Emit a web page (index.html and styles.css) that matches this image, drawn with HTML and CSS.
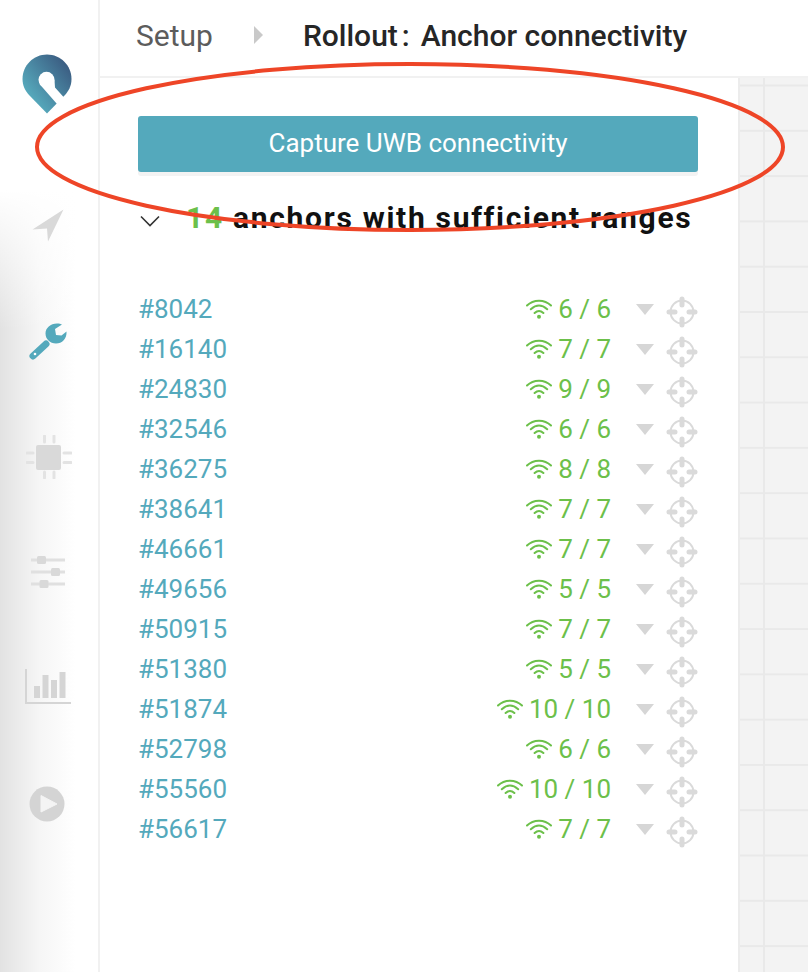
FILE: index.html
```html
<!DOCTYPE html>
<html lang="en">
  <head>
    <meta charset="UTF-8" />
    <title>Anchor connectivity</title>
    <link rel="stylesheet" href="styles.css">
  </head>
  <body>
    <svg width="0" height="0" class="defs">
      <symbol id="wifi" viewBox="0 0 26 20">
        <path d="M1 6.500C7.500 0 18.500 0 25 6.500M4.800 10.300C10 5.500 16 5.500 21.200 10.300M8.600 14C11.500 11.300 14.500 11.300 17.400 14" fill="none" stroke="currentColor" stroke-width="2" stroke-linecap="round"/>
        <circle cx="13" cy="17.800" r="2" fill="currentColor"/>
      </symbol>
      <symbol id="target" viewBox="0 0 32 32">
        <circle cx="16" cy="16" r="11.500" fill="none" stroke="currentColor" stroke-width="2"/>
        <path d="M16 3v6M16 23v6M3 16h6M23 16h6" stroke="currentColor" stroke-width="5" stroke-linecap="round"/>
      </symbol>
    </svg>

    <nav class="sidebar">
      <svg class="logo" width="50" height="60" viewBox="0 0 50 60">
        <defs>
          <linearGradient id="pin" x1="0.1" y1="0.85" x2="0.9" y2="0.1">
            <stop offset="0" stop-color="#5ab4c4"/>
            <stop offset="1" stop-color="#3a5a80"/>
          </linearGradient>
        </defs>
        <path d="M25 0.500C38.500 0.500 49.500 11.500 49.500 25C49.500 32 46.500 37 43 41L25 59.500L7 41C3 36.500 0.500 31.500 0.500 25C0.500 11.500 11.500 0.500 25 0.500Z" fill="url(#pin)"/>
        <circle cx="24.500" cy="25.800" r="8" fill="#fff"/>
        <path d="M17.500 30L35 50L42 43.500L33 33.500L32.500 26Z" fill="#fff"/>
      </svg>

      <svg class="nav-icon nav-send" width="32" height="33" viewBox="0 0 32 33">
        <path d="M31.500 0.500L0.500 20.500L15 19.500L16 32.500Z" fill="#d9d9d9"/>
      </svg>

      <svg class="nav-icon nav-tool" width="38" height="38" viewBox="0 0 38 38">
        <path d="M4 33L17 21" stroke="#54a9bc" stroke-width="7" stroke-linecap="round"/>
        <path d="M28 0.500C30 0.500 32 1 33 1.500L26 6L27 12L32.500 12.500L37.500 8.500C38 16 33 20.500 27 20.500C21 20.500 16.500 16 16.500 10.500C16.500 5 21.500 0.500 28 0.500Z" fill="#54a9bc"/>
        <circle cx="6" cy="31" r="1.300" fill="#fff"/>
      </svg>

      <svg class="nav-icon nav-chip" width="46" height="44" viewBox="0 0 46 44">
        <rect x="10" y="10" width="25" height="25" rx="2" fill="#d9d9d9"/>
        <path d="M18.500 1v6M28 1v6M18.500 37v6M28 37v6M1 18h6M1 27.500h6M38 18h7M38 27.500h7" stroke="#e3e3e3" stroke-width="3" stroke-linecap="round"/>
      </svg>

      <svg class="nav-icon nav-sliders" width="36" height="34" viewBox="0 0 36 34">
        <path d="M1 5h34M1 17h34M1 29h34" stroke="#e0e0e0" stroke-width="3"/>
        <rect x="7" y="1" width="9" height="8" rx="1.500" fill="#d9d9d9"/>
        <rect x="21" y="13" width="9" height="8" rx="1.500" fill="#d9d9d9"/>
        <rect x="9.500" y="25" width="9" height="8" rx="1.500" fill="#d9d9d9"/>
      </svg>

      <svg class="nav-icon nav-chart" width="46" height="35" viewBox="0 0 46 35">
        <path d="M1 0v34h45" fill="none" stroke="#d5d5d5" stroke-width="2"/>
        <path d="M9 17h6v12H9zM17.500 6h6v23h-6zM26 11h6v18h-6zM34.500 3h6v26h-6z" fill="#d5d5d5"/>
      </svg>

      <svg class="nav-icon nav-play" width="36" height="36" viewBox="0 0 36 36">
        <circle cx="18" cy="18" r="17.500" fill="#d4d4d4"/>
        <path d="M12 9.500L28 18L12 26Z" fill="#f4f4f4" stroke="#f4f4f4" stroke-width="1" stroke-linejoin="round"/>
      </svg>
    </nav>

    <main class="main">
      <header class="topbar">
        <span class="crumb">Setup</span>
        <span class="crumb-arrow"></span>
        <span class="title">Rollout<span class="colon">:</span>Anchor connectivity</span>
      </header>

      <div class="content">
        <section class="panel">
          <button class="capture">Capture UWB connectivity</button>

          <div class="summary">
            <svg class="chevron" width="20" height="12" viewBox="0 0 20 12">
              <path d="M1 1.500L10 10.500L19 1.500" fill="none" stroke="#333" stroke-width="1.600"/>
            </svg>
            <h2><span class="good">14</span> anchors with sufficient ranges</h2>
          </div>

          <ul class="anchors">
            <li><a>#8042</a><svg class="wifi"><use href="#wifi"/></svg><span class="count">6 / 6</span><i class="caret"></i><svg class="target"><use href="#target"/></svg></li>
            <li><a>#16140</a><svg class="wifi"><use href="#wifi"/></svg><span class="count">7 / 7</span><i class="caret"></i><svg class="target"><use href="#target"/></svg></li>
            <li><a>#24830</a><svg class="wifi"><use href="#wifi"/></svg><span class="count">9 / 9</span><i class="caret"></i><svg class="target"><use href="#target"/></svg></li>
            <li><a>#32546</a><svg class="wifi"><use href="#wifi"/></svg><span class="count">6 / 6</span><i class="caret"></i><svg class="target"><use href="#target"/></svg></li>
            <li><a>#36275</a><svg class="wifi"><use href="#wifi"/></svg><span class="count">8 / 8</span><i class="caret"></i><svg class="target"><use href="#target"/></svg></li>
            <li><a>#38641</a><svg class="wifi"><use href="#wifi"/></svg><span class="count">7 / 7</span><i class="caret"></i><svg class="target"><use href="#target"/></svg></li>
            <li><a>#46661</a><svg class="wifi"><use href="#wifi"/></svg><span class="count">7 / 7</span><i class="caret"></i><svg class="target"><use href="#target"/></svg></li>
            <li><a>#49656</a><svg class="wifi"><use href="#wifi"/></svg><span class="count">5 / 5</span><i class="caret"></i><svg class="target"><use href="#target"/></svg></li>
            <li><a>#50915</a><svg class="wifi"><use href="#wifi"/></svg><span class="count">7 / 7</span><i class="caret"></i><svg class="target"><use href="#target"/></svg></li>
            <li><a>#51380</a><svg class="wifi"><use href="#wifi"/></svg><span class="count">5 / 5</span><i class="caret"></i><svg class="target"><use href="#target"/></svg></li>
            <li><a>#51874</a><svg class="wifi"><use href="#wifi"/></svg><span class="count">10 / 10</span><i class="caret"></i><svg class="target"><use href="#target"/></svg></li>
            <li><a>#52798</a><svg class="wifi"><use href="#wifi"/></svg><span class="count">6 / 6</span><i class="caret"></i><svg class="target"><use href="#target"/></svg></li>
            <li><a>#55560</a><svg class="wifi"><use href="#wifi"/></svg><span class="count">10 / 10</span><i class="caret"></i><svg class="target"><use href="#target"/></svg></li>
            <li><a>#56617</a><svg class="wifi"><use href="#wifi"/></svg><span class="count">7 / 7</span><i class="caret"></i><svg class="target"><use href="#target"/></svg></li>
          </ul>
        </section>
        <div class="canvas"></div>
      </div>
    </main>

    <!-- red marker drawn over the screenshot -->
    <svg class="marker" width="808" height="972" viewBox="0 0 808 972">
      <ellipse cx="410" cy="147" rx="373" ry="83" fill="none" stroke="#ee4527" stroke-width="4"/>
    </svg>
  </body>
</html>
```

FILE: styles.css
```css
* {
  box-sizing: border-box;
  margin: 0;
  padding: 0;
}
html,
body {
  height: 100%;
}
body {
  display: flex;
  overflow: hidden;
  background: #fff;
  font-family: Roboto, "Liberation Sans", sans-serif;
}
.defs {
  display: block;
}

/* left nav */
.sidebar {
  display: flex;
  flex-direction: column;
  flex: 0 0 100px;
  height: 972px;
  padding-top: 54px;
  border-right: 2px solid #f1f1f1;
  background:
    linear-gradient(to bottom, #fff 190px, rgba(255, 255, 255, 0) 330px),
    linear-gradient(to right, #e2e2e2, #f6f6f6 40px, #fff 75px);
}
.logo {
  margin-left: 22px;
  flex: none;
}
.nav-icon {
  flex: none;
}
.nav-send {
  margin: 95px 0 0 32px;
}
.nav-tool {
  margin: 81px 0 0 29px;
}
.nav-chip {
  margin: 74px 0 0 26px;
}
.nav-sliders {
  margin: 76px 0 0 30px;
}
.nav-chart {
  margin: 80px 0 0 25px;
}
.nav-play {
  margin: 82px 0 0 29px;
}

.main {
  flex: 1;
  display: flex;
  flex-direction: column;
  min-width: 0;
}
.topbar {
  display: flex;
  align-items: center;
  flex: 0 0 78px;
  padding: 0 0 6px 36px;
  border-bottom: 2px solid #f1f1f1;
  font-size: 30px;
}
.crumb {
  color: #5c5c5c;
}
.crumb-arrow {
  width: 0;
  height: 0;
  margin: 0 40px 0 41px;
  border-left: 9px solid #c9c9c9;
  border-top: 9px solid transparent;
  border-bottom: 9px solid transparent;
}
.title {
  color: #262626;
  font-weight: 500;
}
.colon {
  margin: 0 11px 0 4px;
}

.content {
  flex: 1;
  display: flex;
  min-height: 0;
}
.panel {
  flex: 0 0 638px;
  padding: 38px 40px 0 38px;
}
.canvas {
  flex: 1;
  border-left: 2px solid #ececec;
  background-color: #f3f3f3;
  background-image:
    linear-gradient(#e9e9e9 2px, transparent 2px),
    linear-gradient(to right, #e9e9e9 2px, transparent 2px);
  background-size: 100% 45.3px, 45.3px 100%;
  background-position: 0 6.5px, 23px 0;
}

.capture {
  display: block;
  width: 100%;
  height: 56px;
  padding-bottom: 2px;
  border: 0;
  border-radius: 3px;
  background: #54a9bc;
  box-shadow: 0 4px 0 #f3f3f3;
  color: #fff;
  font-family: inherit;
  font-size: 26px;
  font-weight: 400;
}

.summary {
  display: flex;
  align-items: center;
  margin-top: 28px;
}
.chevron {
  margin: 6px 26px 0 2px;
  flex: none;
}
.summary h2 {
  color: #111;
  font-size: 30px;
  font-weight: 700;
  letter-spacing: 1.7px;
  white-space: nowrap;
}
.good {
  color: #6cc04a;
}

.anchors {
  margin-top: 54px;
  list-style: none;
}
.anchors li {
  display: flex;
  align-items: center;
  height: 40px;
}
.anchors a {
  margin-right: auto;
  color: #54a9bc;
  font-size: 26px;
}
.wifi {
  width: 26px;
  height: 20px;
  margin-right: 6px;
  color: #6cc04a;
}
.count {
  color: #6cc04a;
  font-size: 26px;
  font-weight: 400;
}
.caret {
  width: 0;
  height: 0;
  margin: 0 12px 0 25px;
  border-top: 11px solid #d6d6d6;
  border-left: 9px solid transparent;
  border-right: 9px solid transparent;
}
.target {
  width: 32px;
  height: 32px;
  margin-top: 5px;
  color: #dadada;
}

.marker {
  position: absolute;
  top: 0;
  left: 0;
  pointer-events: none;
}
```
